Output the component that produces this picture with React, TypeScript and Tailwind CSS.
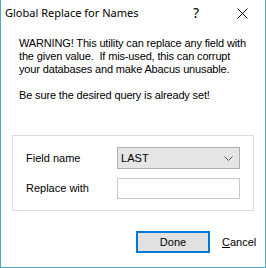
export default function App() {
  return (
    <div className="w-[266px] h-[268px] bg-white border-x border-b border-[#4ea9c1] flex flex-col font-['Liberation_Sans',sans-serif] text-[11px] text-black">
      <div className="h-[30px] flex items-start">
        <div className="pl-[4px] pt-[5px] text-[11px] font-['Noto_Sans',sans-serif] leading-[16px] flex-1">
          Global Replace for Names
        </div>
        <div className="w-[46px] pt-[5px] text-[14px] font-['Noto_Sans',sans-serif] leading-[16px] text-center">?</div>
        <div className="w-[46px] pt-[8px] flex justify-center">
          <svg width="11" height="11" viewBox="0 0 11 11" stroke="#000" strokeWidth="1">
            <path d="M0.5 0.5 L10.5 10.5 M10.5 0.5 L0.5 10.5" />
          </svg>
        </div>
      </div>
      <div className="pl-[18px] pt-[7px] leading-[13px] tracking-[-0.15px] whitespace-nowrap">
        <p>
          WARNING! This utility can replace any field with
          <br />
          the given value.&nbsp; If mis-used, this can corrupt
          <br />
          your databases and make Abacus unusable.
        </p>
        <p className="mt-[13px]">Be sure the desired query is already set!</p>
      </div>
      <div className="mx-[11px] mt-[33px] h-[76px] border border-[#dcdcdc] px-[13px] pt-[11px] flex flex-col gap-[9px]">
        <div className="flex items-center">
          <span className="w-[92px]">Field name</span>
          <div className="w-[124px] h-[22px] bg-[#e5e5e5] border border-[#adadad] flex items-center justify-between pl-[3px] pr-[6px]">
            <span>LAST</span>
            <svg width="9" height="5" viewBox="0 0 9 5" fill="none" stroke="#555" strokeWidth="1">
              <path d="M0.5 0.5 L4.5 4.5 L8.5 0.5" />
            </svg>
          </div>
        </div>
        <div className="flex items-center">
          <span className="w-[92px]">Replace with</span>
          <div className="w-[124px] h-[21px] bg-white border border-[#c8c8c8]" />
        </div>
      </div>
      <div className="mt-[20px] flex items-center pl-[135px]">
        <button className="w-[74px] h-[22px] bg-[#e1e1e1] border-2 border-[#0078d7] text-[11px]">Done</button>
        <span className="ml-[12px]"><span className="underline">C</span>ancel</span>
      </div>
    </div>
  );
}
